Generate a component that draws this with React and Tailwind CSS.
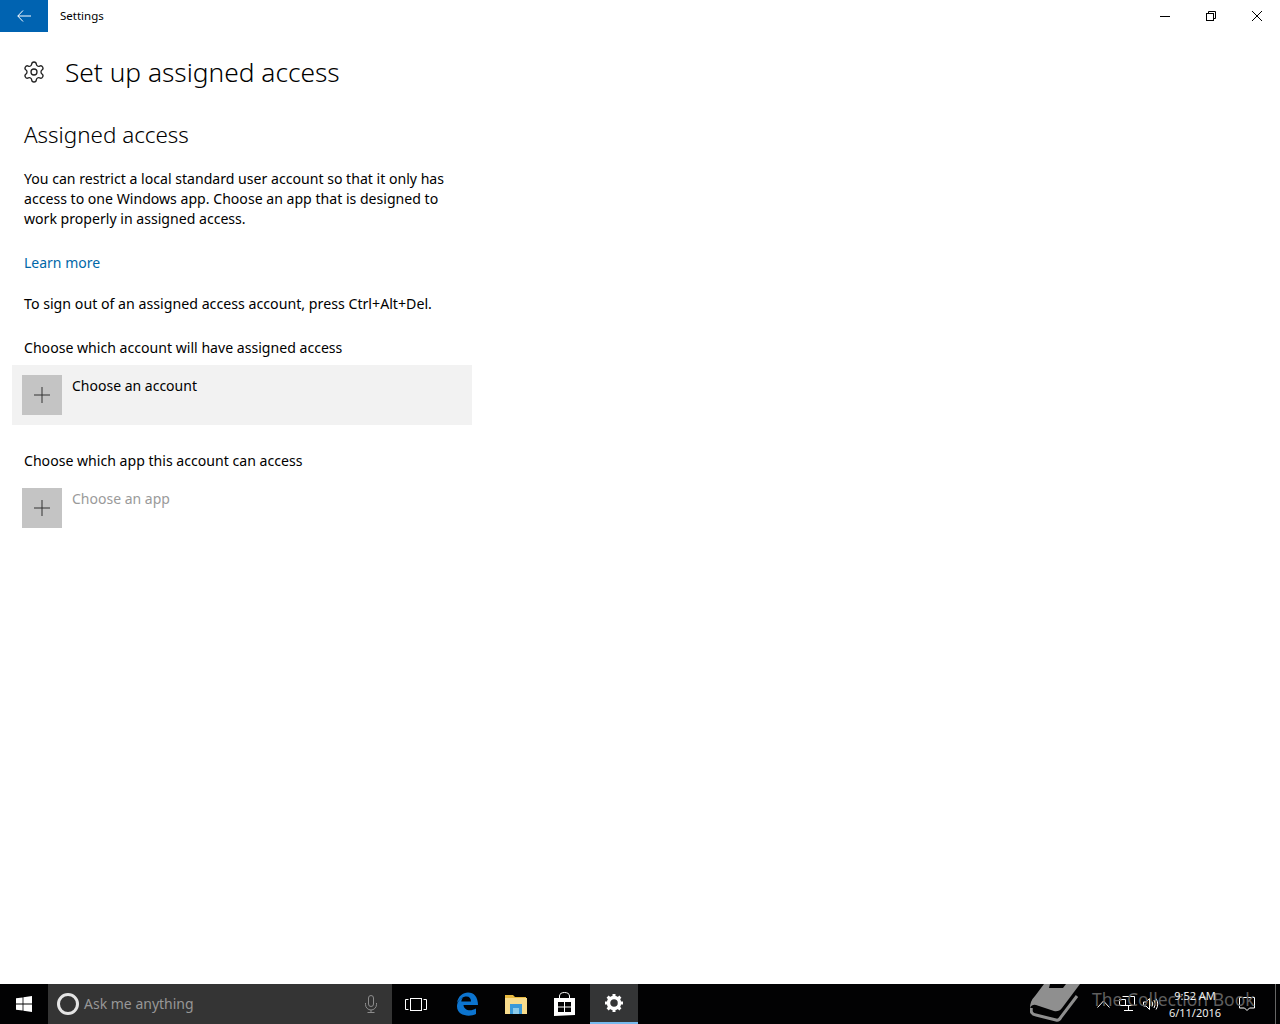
import { Settings } from "lucide-react";

function PlusTile() {
  return (
    <div className="w-10 h-10 bg-[#c4c4c4] flex items-center justify-center shrink-0">
      <svg width="16" height="16" viewBox="0 0 16 16" stroke="#333" strokeWidth="1">
        <path d="M8 0V16M0 8H16" />
      </svg>
    </div>
  );
}

function WinLogo() {
  return (
    <svg width="16" height="16" viewBox="0 0 16 16" fill="#fff">
      <path d="M0 2.3 6.6 1.4V7.6H0ZM7.4 1.3 16 0V7.6H7.4ZM0 8.4H6.6V14.6L0 13.7ZM7.4 8.4H16V16L7.4 14.7Z" />
    </svg>
  );
}

function Taskbar() {
  return (
    <div className="relative h-10 bg-[#020203] flex items-stretch shrink-0 overflow-hidden">
      <div className="w-12 flex items-center justify-center">
        <WinLogo />
      </div>
      <div className="w-[344px] bg-[#343434] flex items-center pl-[9px] pr-[15px]">
        <div className="w-[22px] h-[22px] rounded-full border-[3px] border-[#e4e4e4]" />
        <span className="ml-[5px] -mt-px text-[14px] text-[#979797] flex-1">Ask me anything</span>
        <svg width="12" height="18" viewBox="0 0 12 18" fill="none" stroke="#8c8c8c" strokeWidth="1">
          <rect x="3.5" y="0.5" width="5" height="11" rx="2.5" />
          <path d="M0.5 8v1.5a5.5 5.5 0 0 0 11 0V8M6 15v2.5M2.5 17.5h7" />
        </svg>
      </div>
      {/* task view */}
      <div className="w-12 flex items-center justify-center">
        <svg width="22" height="13" viewBox="0 0 22 13" fill="none" stroke="#fff" strokeWidth="1">
          <path d="M3.5 1.5H0.5V11.5H3.5M18.5 1.5H21.5V11.5H18.5" />
          <rect x="5.5" y="0.5" width="11" height="12" />
        </svg>
      </div>
      {/* edge */}
      <div className="w-[54px] flex items-center justify-center">
        <svg width="22" height="24" viewBox="0 0 22 24">
          <path
            fill="#0c74cf"
            d="M1 11C2 4 7 .5 12 .5c6 0 10 4.500 10 12.500H7.500c.3 5 6.500 7 12.500 3.500v5.500C13 25.500 1 23.500 1 14.500 1 10.500 3.500 7 7 5.500 6 7 5.500 8 5.300 9.500H15C15 6.500 13.500 4.500 10.500 4.500 7 4.500 3.500 7 1 11Z"
          />
        </svg>
      </div>
      {/* explorer */}
      <div className="w-[44px] flex items-center justify-center">
        <svg width="22" height="19" viewBox="0 0 22 19">
          <path fill="#e8b93f" d="M0 0H8L10 2H21V5H0Z" />
          <path fill="#f8dc8c" d="M0 3H22V19H0Z" />
          <path fill="#3a9ad9" d="M5 9H17V19H14V13H8V19H5Z" />
          <path fill="#8ccbea" d="M8 13H14V19H8Z" />
        </svg>
      </div>
      {/* store */}
      <div className="w-[52px] flex items-center justify-center">
        <svg width="21" height="24" viewBox="0 0 21 24">
          <path fill="none" stroke="#fff" strokeWidth="1" d="M5.500 7V4C5.500 1.500 8 .5 10.500.5S15.500 1.500 15.500 4V7" />
          <path fill="#fff" d="M0 6H21V23L0 24Z" />
          <path fill="#020203" d="M4 10H10V14.500H4ZM11 10H17V14.500H11ZM4 15.500H10V20H4ZM11 15.500H17V20H11Z" />
        </svg>
      </div>
      {/* active settings */}
      <div className="w-12 bg-[#343536] flex items-center justify-center border-b-2 border-[#76b9ed]">
        <svg width="18" height="18" viewBox="0 0 18 18">
          <circle cx="9" cy="9" r="5.500" fill="none" stroke="#fff" strokeWidth="3.500" />
          <path
            stroke="#fff"
            strokeWidth="3"
            d="M9 0V3.500M9 14.500V18M0 9H3.500M14.500 9H18M2.600 2.600 5.100 5.100M12.900 12.900 15.400 15.400M2.600 15.400 5.100 12.900M12.900 5.100 15.400 2.600"
          />
        </svg>
      </div>
      <div className="flex-1" />
      {/* system tray */}
      <div className="w-[180px] flex items-center text-white">
        <svg className="ml-[2px]" width="13" height="8" viewBox="0 0 13 8" fill="none" stroke="#fff" strokeWidth="1">
          <path d="M.5 7.500 6.500 1l6 6.500" />
        </svg>
        <svg className="ml-[9px]" width="16" height="16" viewBox="0 0 16 16" fill="none" stroke="#fff" strokeWidth="1">
          <path d="M3.500.5H15.500V9.500H3.500M.5 3.500H6.500V9.500H.5ZM9.500 9.500V14M5 14.500H14" />
        </svg>
        <svg className="ml-[8px]" width="16" height="14" viewBox="0 0 16 14" fill="none" stroke="#fff" strokeWidth="1">
          <path d="M.5 5H3L6.500 1.500V12.500L3 9H.5ZM9 4.500Q10.500 7 9 9.500M11 3Q13.500 7 11 11M13 1.500Q16.500 7 13 12.500" />
        </svg>
        <div className="relative z-10 w-[66px] ml-[3px] flex flex-col items-center text-[11px] leading-[17px] text-[#eee]">
          <span>9:52 AM</span>
          <span>6/11/2016</span>
        </div>
        <svg className="ml-[11px]" width="16" height="16" viewBox="0 0 16 16" fill="none" stroke="#fff" strokeWidth="1">
          <path d="M.5 1.500H15.500V12H10.500L8 14.500 5.500 12H.5Z" />
        </svg>
      </div>
      <div className="w-[5px] border-l border-[#666]" />

      {/* watermark over the tray */}
      <div className="absolute left-[1030px] top-0 h-10 flex items-center gap-[12px] pointer-events-none">
        <svg width="50" height="40" viewBox="0 0 50 40" fill="#8f8f8f">
          <path d="M14 0H50L32 24Q29 28 24 27L6 21Q2 20 0 24 0 17 5 12Z" />
          <path fill="#020203" d="M20 0H36L33 4H19Z" />
          <path fill="none" stroke="#8f8f8f" strokeWidth="3" d="M1.500 24Q0 30 6 31L26 36Q29 37 31 33L47 12" />
        </svg>
        <span className="-mt-[10px] text-[17.5px] text-[#5e5e5e] whitespace-nowrap">The Collection Book</span>
      </div>
    </div>
  );
}

export default function App() {
  return (
    <div className="h-[1024px] bg-white flex flex-col overflow-hidden text-black font-['Noto_Sans',sans-serif]">
      <div className="h-8 flex items-center shrink-0">
        <div className="w-12 h-8 bg-[#0063b1] flex items-center justify-center">
          <svg width="14" height="12" viewBox="0 0 14 12" fill="none" stroke="#fff" strokeWidth="1">
            <path d="M14 6H.8M6 .5.8 6 6 11.500" />
          </svg>
        </div>
        <span className="ml-3 text-[11.5px]">Settings</span>
        <div className="flex-1" />
        <div className="w-[46px] flex justify-center">
          <div className="w-[10px] h-px bg-black" />
        </div>
        <div className="w-[46px] flex justify-center">
          <svg width="10" height="10" viewBox="0 0 10 10" fill="none" stroke="#000" strokeWidth="1">
            <path d="M2.500 2.500V.5H9.500V7.500H7.500" />
            <rect x=".5" y="2.500" width="7" height="7" />
          </svg>
        </div>
        <div className="w-[46px] flex justify-center">
          <svg width="10" height="10" viewBox="0 0 10 10" fill="none" stroke="#000" strokeWidth="1">
            <path d="M0 0 10 10M10 0 0 10" />
          </svg>
        </div>
      </div>

      <div className="flex-1 pl-6 pt-5">
        <div className="flex items-center h-10">
          <Settings size={24} strokeWidth={1.3} color="#222" className="-ml-[2px]" />
          <h1 className="ml-[19px] -mt-px text-[26.3px] font-light leading-10">Set up assigned access</h1>
        </div>
        <h2 className="mt-[27px] text-[22.4px] font-light leading-8">Assigned access</h2>
        <p className="mt-[18px] w-[430px] text-[14.1px] leading-5">
          You can restrict a local standard user account so that it only has access to one Windows app. Choose an app that is designed to work properly in assigned access.
        </p>
        <div className="mt-6 text-[14px] leading-5 text-[#0067a8]">Learn more</div>
        <p className="mt-[21px] text-[14.2px] leading-5">To sign out of an assigned access account, press Ctrl+Alt+Del.</p>
        <p className="mt-6 text-[14.1px] leading-5">Choose which account will have assigned access</p>

        <div className="mt-[7px] -ml-3 w-[460px] h-[60px] bg-[#f2f2f2] flex items-start p-[10px]">
          <PlusTile />
          <span className="ml-[10px] mt-px text-[14px] leading-5">Choose an account</span>
        </div>

        <p className="mt-[26px] text-[14.1px] leading-5">Choose which app this account can access</p>
        <div className="mt-[17px] -ml-[2px] flex items-start">
          <PlusTile />
          <span className="ml-[10px] mt-px text-[14px] leading-5 text-[#9a9a9a]">Choose an app</span>
        </div>
      </div>

      <Taskbar />
    </div>
  );
}
